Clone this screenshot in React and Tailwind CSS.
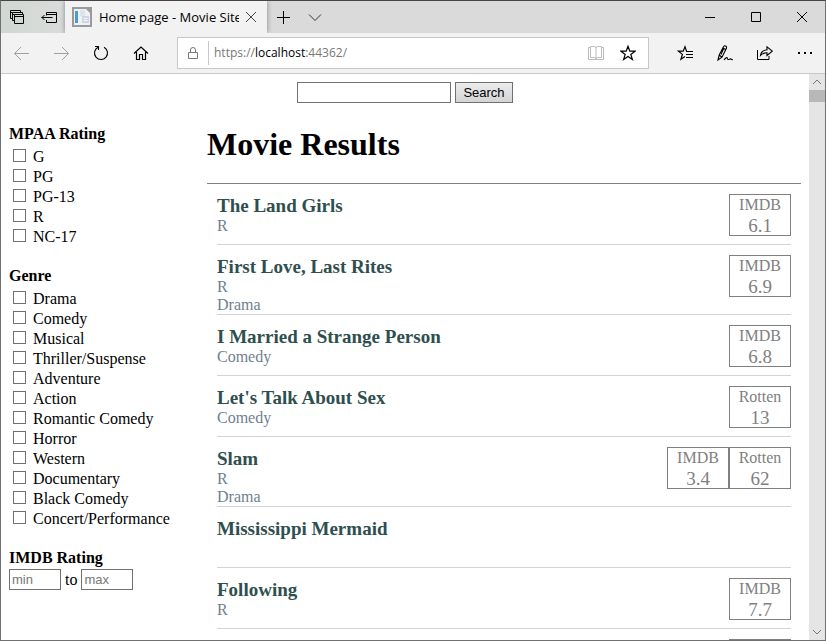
import React from "react";

const ratings = ["G", "PG", "PG-13", "R", "NC-17"];

const genres = [
  "Drama",
  "Comedy",
  "Musical",
  "Thriller/Suspense",
  "Adventure",
  "Action",
  "Romantic Comedy",
  "Horror",
  "Western",
  "Documentary",
  "Black Comedy",
  "Concert/Performance",
];

const movies = [
  { title: "The Land Girls", details: ["R"], scores: [["IMDB", "6.1"]] },
  { title: "First Love, Last Rites", details: ["R", "Drama"], scores: [["IMDB", "6.9"]] },
  { title: "I Married a Strange Person", details: ["Comedy"], scores: [["IMDB", "6.8"]] },
  { title: "Let's Talk About Sex", details: ["Comedy"], scores: [["Rotten", "13"]] },
  { title: "Slam", details: ["R", "Drama"], scores: [["IMDB", "3.4"], ["Rotten", "62"]] },
  { title: "Mississippi Mermaid", details: [], scores: [] },
  { title: "Following", details: ["R"], scores: [["IMDB", "7.7"]] },
];

function Icon({ children, className = "", size = 16 }) {
  return (
    <svg
      width={size}
      height={size}
      viewBox={`0 0 ${size} ${size}`}
      fill="none"
      stroke="currentColor"
      strokeWidth="1"
      className={`block shrink-0 ${className}`}
      aria-hidden="true"
    >
      {children}
    </svg>
  );
}

function IconButton({ label, className, children }) {
  return (
    <button type="button" aria-label={label} className={`flex h-8 shrink-0 items-center justify-center ${className}`}>
      {children}
    </button>
  );
}

function TitleBar() {
  return (
    <div className="flex h-8 shrink-0 bg-[#dadada] text-black">
      <div className="flex w-16 shrink-0 bg-linear-to-r from-[#d0d8d3] to-[#d9dcda]">
        <IconButton label="Tabs you've set aside" className="w-8">
          <Icon>
            <path d="M3 9.500H1.500v-8h10V3M1.500 3.500h2M5 11.500H3.500v-8h10V5M3.500 5.500h2" />
            <path d="M5.500 5.500h9v9h-9zM5.500 7.500h9" />
          </Icon>
        </IconButton>
        <IconButton label="Set these tabs aside" className="w-8">
          <Icon>
            <path d="M5.500 6.500v-3h10v10h-10v-2.500M5.500 5.500h10M.5 8.500h11M3.500 6L1 8.500 3.500 11" />
          </Icon>
        </IconButton>
      </div>
      <div className="z-10 flex w-[202px] shrink-0 items-center bg-[#f2f2f2] pl-[7px] shadow-[0_0_5px_rgba(0,0,0,0.4)] [clip-path:inset(0_-6px_0_-6px)]">
        <Icon size={20}>
          <path d="M0 0h20v20H0z" fill="#9a9a9a" stroke="none" />
          <path d="M2 2h12l4 4v12H2z" fill="#eef1f5" stroke="none" />
          <path d="M3 4h3v12H3z" fill="#4a9cd0" stroke="none" />
          <path d="M8 3h5v6H8z" fill="#dde4ee" stroke="none" />
          <path d="M10 9h7v7h-7z" fill="#cdd6e4" stroke="none" />
          <path d="M11.500 11.500h4M11.500 13.500h4" stroke="#f4f6fa" />
        </Icon>
        <span className="ml-[7px] w-[140px] overflow-hidden whitespace-nowrap font-['Open_Sans',sans-serif] text-[13px] leading-5">
          Home page - Movie Site
        </span>
        <IconButton label="Close tab" className="w-6">
          <Icon className="text-[#444]">
            <path d="M3 3l10 10M13 3L3 13" />
          </Icon>
        </IconButton>
      </div>
      <IconButton label="New tab" className="w-8">
        <Icon>
          <path d="M8.500 2v13M2 8.500h13" />
        </Icon>
      </IconButton>
      <IconButton label="Show tab previews" className="w-8">
        <Icon className="text-[#333]">
          <path d="M2 5.500L8 11.500 14 5.500" />
        </Icon>
      </IconButton>
      <div className="flex-1" />
      <IconButton label="Minimize" className="w-[46px]">
        <Icon>
          <path d="M3 8.500h10" />
        </Icon>
      </IconButton>
      <IconButton label="Maximize" className="w-[46px]">
        <Icon>
          <path d="M3.500 3.500h9v9h-9z" />
        </Icon>
      </IconButton>
      <IconButton label="Close" className="w-[46px]">
        <Icon>
          <path d="M3 3l10 10M13 3L3 13" />
        </Icon>
      </IconButton>
    </div>
  );
}

function Toolbar() {
  return (
    <div className="flex h-[41px] shrink-0 items-center border-b border-[#c8c8c8] bg-[#f2f2f2] text-black">
      <IconButton label="Back" className="w-10">
        <Icon className="text-[#a0a0a0]">
          <path d="M1.500 8.500H16M8 2L1.500 8.500 8 15" />
        </Icon>
      </IconButton>
      <IconButton label="Forward" className="w-10">
        <Icon className="text-[#a0a0a0]">
          <path d="M1 8.500h14.500M9 2l6.500 6.500L9 15" />
        </Icon>
      </IconButton>
      <IconButton label="Refresh" className="w-10">
        <Icon>
          <path d="M5 2.200A6.500 6.500 0 1 0 11 2.200M2 1.500h3.500V5" strokeWidth="1.100" />
        </Icon>
      </IconButton>
      <IconButton label="Home" className="w-10">
        <Icon>
          <path d="M1 8.500L8 2l7 6.500M3.500 7v7.500h3v-5h3v5h3V7" strokeWidth="1.200" />
        </Icon>
      </IconButton>
      <div className="ml-4 flex h-8 flex-1 items-center border border-[#c8c8c8] bg-white">
        <div className="flex h-6 w-[31px] shrink-0 items-center justify-center border-r border-[#c8c8c8]">
          <Icon className="text-[#777]">
            <path d="M3.500 7.500h9v6h-9zM5.500 7.500V5a2.500 2.500 0 0 1 5 0v2.500" />
          </Icon>
        </div>
        <a
          href="https://localhost:44362/"
          className="ml-[5px] flex-1 font-['Open_Sans',sans-serif] text-[12px] leading-5 text-[#777]"
        >
          https://<span className="text-black">localhost</span>:44362/
        </a>
        <IconButton label="Reading view" className="w-8">
          <Icon className="text-[#bbb]">
            <path d="M2.500 2.500h-2v12h15v-12h-2" />
            <path d="M2.500 1.500h4q1.500 0 1.500 1.500 0-1.500 1.500-1.500h4v11h-4q-1.500 0-1.500 1.500 0-1.500-1.500-1.500h-4zM8 3v11" />
          </Icon>
        </IconButton>
        <IconButton label="Add to favorites" className="mr-1 w-8">
          <Icon>
            <path d="M8 1.200l1.800 5h5.200l-4.200 3.200 1.600 5.100L8 11.400l-4.400 3.100 1.600-5.100L1 6.200h5.200z" strokeWidth="1.200" />
          </Icon>
        </IconButton>
      </div>
      <IconButton label="Favorites" className="ml-4 w-10">
        <Icon>
          <path d="M10 6.200H9.500L8 1.800 6.200 6.200H1.500l3.900 3.200-1.500 4.900L8 11.500" strokeWidth="1.200" />
          <path d="M9 6.500h7M9 9.500h7M9 12.500h7" />
        </Icon>
      </IconButton>
      <IconButton label="Add notes" className="w-10">
        <Icon>
          <path d="M1 15L2.200 10 6.500 1.800Q7.500 0 9 1.200 10 2.200 9.200 3.700L5 12.200zM2.200 10l2.800 2.200M6 3l2.500 1.500M6.500 4L4 9.500" strokeWidth="1.100" />
          <path d="M7 15q1-1.500 2.200-2.300T10.500 14q.5 1 2 .2t2 .2q.8.600 1.500 0" strokeWidth="1.100" />
        </Icon>
      </IconButton>
      <IconButton label="Share" className="w-10">
        <Icon>
          <path d="M.5 5v9.500h11.500V11" />
          <path d="M3.500 10.500Q4 5.500 10 4.800V1.800l5.300 4.400L10 10.500V7.800Q6 7.800 3.500 10.500z" strokeWidth="1.100" />
        </Icon>
      </IconButton>
      <IconButton label="Settings and more" className="w-10">
        <Icon>
          <path d="M1 7h2v2H1zM7 7h2v2H7zM13 7h2v2h-2z" fill="currentColor" stroke="none" />
        </Icon>
      </IconButton>
    </div>
  );
}

function CheckList({ title, options }) {
  return (
    <fieldset className="mb-[19px]">
      <legend className="font-bold leading-5">{title}</legend>
      <div className="mt-[3px]">
        {options.map((option) => (
          <label key={option} className="flex h-5 items-start">
            <input
              type="checkbox"
              className="mt-0.5 mr-[7px] ml-1 size-[13px] shrink-0 appearance-none border border-[#707070] bg-white"
            />
            {option}
          </label>
        ))}
      </div>
    </fieldset>
  );
}

const rangeInput =
  "h-[21px] w-[52px] border border-[#707070] bg-white px-0.5 font-['Liberation_Sans',sans-serif] text-[13px] placeholder:text-[#767676]";

function Filters() {
  return (
    <form className="w-[198px] shrink-0 pt-[21px]">
      <CheckList title="MPAA Rating" options={ratings} />
      <CheckList title="Genre" options={genres} />
      <fieldset>
        <legend className="font-bold leading-5">IMDB Rating</legend>
        <div className="mt-px flex items-center gap-1">
          <input type="text" placeholder="min" aria-label="Minimum IMDB rating" className={rangeInput} />
          to
          <input type="text" placeholder="max" aria-label="Maximum IMDB rating" className={rangeInput} />
        </div>
      </fieldset>
    </form>
  );
}

function Score({ source, value }) {
  return (
    <div className="h-[42px] w-[62px] border border-[#808080] text-center text-[#808080]">
      <div className="leading-5">{source}</div>
      <div className="text-[19px] leading-[22px]">{value}</div>
    </div>
  );
}

function Movie({ title, details, scores }) {
  return (
    <li className="flex min-h-[61px] justify-between border-b border-[#d3d3d3] pt-2.5">
      <div className="leading-[18px] text-[#708090]">
        <h3 className="text-[19px] leading-[23px] font-bold text-[#2f4f4f]">{title}</h3>
        {details.map((detail) => (
          <div key={detail}>{detail}</div>
        ))}
      </div>
      <div className="flex">
        {scores.map(([source, value]) => (
          <Score key={source} source={source} value={value} />
        ))}
      </div>
    </li>
  );
}

function Results() {
  return (
    <main className="min-w-0 flex-1">
      <h1 className="pt-[23px] text-[32px] leading-[37px] font-bold">Movie Results</h1>
      <ul className="mt-5 border-t border-[#808080] px-2.5">
        {movies.map((movie) => (
          <Movie key={movie.title} {...movie} />
        ))}
        <li className="flex justify-end pt-2.5">
          <Score />
        </li>
      </ul>
    </main>
  );
}

function ScrollBar() {
  return (
    <div className="flex w-4 shrink-0 flex-col bg-[#e5e5e5] text-[#777]">
      <div className="flex h-4 items-center justify-center">
        <Icon>
          <path d="M4 10l4-4 4 4" />
        </Icon>
      </div>
      <div className="h-3 bg-[#b8b8b8]" />
      <div className="flex-1" />
      <div className="flex h-4 items-center justify-center">
        <Icon>
          <path d="M4 6l4 4 4-4" />
        </Icon>
      </div>
    </div>
  );
}

export default function App() {
  return (
    <div className="flex h-screen flex-col overflow-hidden border border-t-[#474347] border-r-[#707070] border-b-[#707070] border-l-[#707070] bg-white">
      <TitleBar />
      <Toolbar />
      <div className="flex min-h-0 flex-1">
        <div className="min-w-0 flex-1 overflow-hidden px-2 pt-2 font-['Liberation_Serif',serif] text-[16px] leading-5 text-black">
          <form className="flex justify-center gap-1">
            <input
              type="text"
              aria-label="Search movies"
              className="h-[21px] w-[154px] border border-[#707070] bg-white px-0.5 font-['Liberation_Sans',sans-serif] text-[13px]"
            />
            <button
              type="button"
              className="h-[21px] w-[58px] border border-[#707070] bg-linear-to-b from-[#ececec] to-[#d4d4d4] font-['Liberation_Sans',sans-serif] text-[13px] leading-[19px]"
            >
              Search
            </button>
          </form>
          <div className="flex">
            <Filters />
            <Results />
          </div>
        </div>
        <ScrollBar />
      </div>
    </div>
  );
}
